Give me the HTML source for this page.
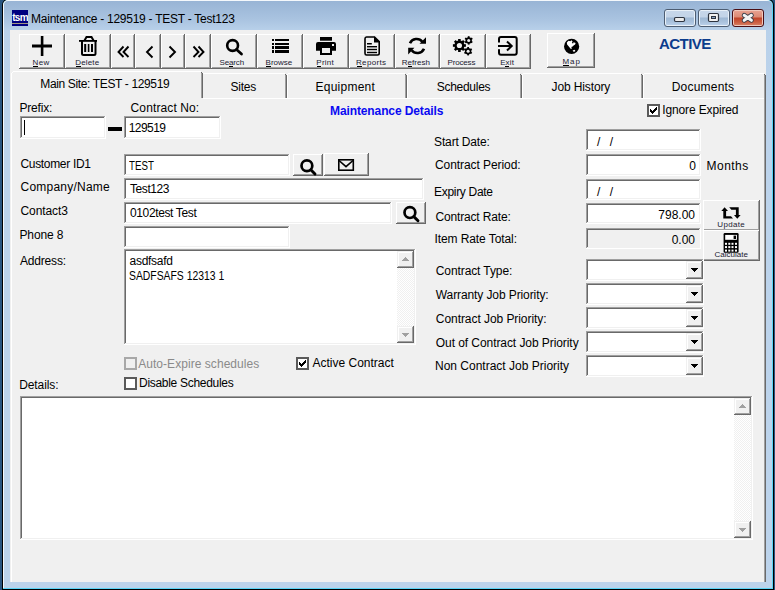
<!DOCTYPE html>
<html><head><meta charset="utf-8">
<style>
*{margin:0;padding:0;box-sizing:border-box}
html,body{width:775px;height:590px;overflow:hidden;background:#29557f}
body{position:relative;font-family:"Liberation Sans",sans-serif;font-size:12px;color:#000}
.a{position:absolute}
.t{position:absolute;white-space:nowrap;line-height:14px;font-size:12px;color:#000}
.s{position:absolute;white-space:nowrap;line-height:10px;font-size:8px;color:#202030;text-align:center}
.rb{position:absolute;background:#f0f0f0;box-shadow:inset -1px -1px #696969,inset 1px 1px #fff,inset -2px -2px #a0a0a0}
.sk{position:absolute;background:#fff;box-shadow:inset -1px -1px #fff,inset 1px 1px #a0a0a0,inset -2px -2px #f0f0f0,inset 2px 2px #696969}
.sb{position:absolute;background:#f0f0f0;box-shadow:inset -1px -1px #696969,inset 1px 1px #f0f0f0,inset -2px -2px #a0a0a0,inset 2px 2px #fff}
.cb{position:absolute;width:13px;height:13px;background:#fff;border:2px solid #5a5a5a}
.u{position:absolute;height:1px;background:#000}
</style></head><body>
<!-- window frame -->
<div class="a" style="left:2px;top:-1px;width:772px;height:591px;background:#000;border-radius:6px 6px 0 0"></div>
<div class="a" style="left:3px;top:0;width:770px;height:589px;background:#5ad4f6;border-radius:5px 5px 0 0"></div>
<div class="a" style="left:3px;top:0;width:769px;height:588px;background:#f4f8fc;border-radius:5px 5px 0 0"></div>
<div class="a" style="left:4px;top:1px;width:768px;height:587px;background:linear-gradient(#98b4d5 0px,#a9c3e0 18px,#b9d1ea 30px,#bcd3eb 100px);border-radius:4px 4px 0 0"></div>
<!-- client area -->
<div class="a" style="left:10px;top:30px;width:756px;height:552px;background:#f0f0f0"></div>
<!-- title icon -->
<div class="a" style="left:12px;top:10px;width:16px;height:16px;background:#000080"></div>
<div class="a" style="left:12px;top:23px;width:16px;height:1px;background:#a09682"></div>
<div class="a" style="left:12px;top:12px;width:16px;height:11px;color:#fff;font:bold 10px/11px 'Liberation Sans',sans-serif;letter-spacing:-0.7px;text-align:center;overflow:hidden">tsm</div>
<div class="t" style="left:31.1px;top:12px;font-size:12px;letter-spacing:-0.25px;color:#000">Maintenance - 129519 - TEST - Test123</div>
<!-- caption buttons -->
<div class="a" style="left:664px;top:9px;width:32px;height:18px;border:1px solid #4d5d72;border-radius:3px;background:linear-gradient(#c7d7ea 0,#c3d4e8 7px,#9fb8d4 8px,#aac2dd 12px,#bdd3ec 16px);box-shadow:inset 0 0 0 1px #e8f0f8"></div>
<div class="a" style="left:698px;top:9px;width:32px;height:18px;border:1px solid #4d5d72;border-radius:3px;background:linear-gradient(#c7d7ea 0,#c3d4e8 7px,#9fb8d4 8px,#aac2dd 12px,#bdd3ec 16px);box-shadow:inset 0 0 0 1px #e8f0f8"></div>
<div class="a" style="left:732px;top:9px;width:32px;height:18px;border:1px solid #4a0e14;border-radius:3px;background:linear-gradient(#e8a494 0,#dc8a74 7px,#c0442a 8px,#cb5c40 12px,#d98468 16px);box-shadow:inset 0 0 0 1px #f0c8bc"></div>
<!-- toolbar buttons -->
<div class="rb" style="left:19px;top:34px;width:46px;height:35px"></div>
<div class="rb" style="left:65px;top:34px;width:46px;height:35px"></div>
<div class="rb" style="left:111px;top:34px;width:24px;height:35px"></div>
<div class="rb" style="left:135px;top:34px;width:26px;height:35px"></div>
<div class="rb" style="left:161px;top:34px;width:24px;height:35px"></div>
<div class="rb" style="left:185px;top:34px;width:26px;height:35px"></div>
<div class="rb" style="left:211px;top:34px;width:46px;height:35px"></div>
<div class="rb" style="left:257px;top:34px;width:46px;height:35px"></div>
<div class="rb" style="left:303px;top:34px;width:46px;height:35px"></div>
<div class="rb" style="left:349px;top:34px;width:46px;height:35px"></div>
<div class="rb" style="left:395px;top:34px;width:45px;height:35px"></div>
<div class="rb" style="left:440px;top:34px;width:46px;height:35px"></div>
<div class="rb" style="left:486px;top:34px;width:45px;height:35px"></div>
<div class="rb" style="left:547px;top:33px;width:48px;height:35px"></div>
<!-- toolbar labels -->
<div class="s" style="left:18.2px;top:58.0px;width:46px;letter-spacing:0.4px">New</div>
<div class="s" style="left:64.3px;top:58.0px;width:46px;letter-spacing:0.16px">Delete</div>
<div class="s" style="left:208.8px;top:58.0px;width:46px;letter-spacing:-0.16px">Search</div>
<div class="s" style="left:255.9px;top:58.0px;width:46px">Browse</div>
<div class="s" style="left:302.1px;top:58.0px;width:46px;letter-spacing:0.2px">Print</div>
<div class="s" style="left:348.2px;top:58.0px;width:46px;letter-spacing:0.33px">Reports</div>
<div class="s" style="left:393.4px;top:58.0px;width:45px;letter-spacing:0.05px">Refresh</div>
<div class="s" style="left:438.4px;top:58.0px;width:46px;letter-spacing:-0.17px">Process</div>
<div class="s" style="left:484.6px;top:58.0px;width:45px;letter-spacing:0.13px">Exit</div>
<div class="s" style="left:547.6px;top:57.0px;width:48px;letter-spacing:0.95px">Map</div>
<div class="u" style="left:33px;top:66px;width:5px"></div>
<div class="u" style="left:76px;top:66px;width:5px"></div>
<div class="u" style="left:229px;top:66px;width:4px"></div>
<div class="u" style="left:266px;top:66px;width:5px"></div>
<div class="u" style="left:317px;top:66px;width:4px"></div>
<div class="u" style="left:357px;top:66px;width:5px"></div>
<div class="u" style="left:408px;top:66px;width:4px"></div>
<div class="u" style="left:505px;top:66px;width:4px"></div>
<div class="u" style="left:563px;top:65px;width:6px"></div>
<div class="a" style="left:659px;top:35px;font:bold 15px/18px 'Liberation Sans',sans-serif;letter-spacing:-0.55px;color:#0b3c8c;white-space:nowrap">ACTIVE</div>
<!-- tabs -->
<div class="a" style="left:13px;top:71px;width:188px;height:1px;background:#fff"></div>
<div class="a" style="left:12px;top:72px;width:1px;height:1px;background:#fff"></div>
<div class="a" style="left:11px;top:73px;width:1px;height:509px;background:#fff"></div>
<div class="a" style="left:201px;top:72px;width:1px;height:1px;background:#696969"></div>
<div class="a" style="left:201px;top:73px;width:1px;height:25px;background:#a0a0a0"></div>
<div class="a" style="left:202px;top:73px;width:1px;height:25px;background:#696969"></div>
<div class="a" style="left:203px;top:73px;width:82px;height:1px;background:#fff"></div>
<div class="a" style="left:285px;top:74px;width:1px;height:24px;background:#696969"></div>
<div class="a" style="left:285px;top:75px;width:1px;height:23px;background:#a0a0a0"></div>
<div class="a" style="left:286px;top:75px;width:1px;height:23px;background:#696969"></div>
<div class="a" style="left:287px;top:75px;width:1px;height:23px;background:#fff"></div>
<div class="a" style="left:288px;top:73px;width:117px;height:1px;background:#fff"></div>
<div class="a" style="left:287px;top:74px;width:1px;height:1px;background:#fff"></div>
<div class="a" style="left:405px;top:74px;width:1px;height:1px;background:#696969"></div>
<div class="a" style="left:405px;top:75px;width:1px;height:23px;background:#a0a0a0"></div>
<div class="a" style="left:406px;top:75px;width:1px;height:23px;background:#696969"></div>
<div class="a" style="left:407px;top:75px;width:1px;height:23px;background:#fff"></div>
<div class="a" style="left:407px;top:74px;width:1px;height:1px;background:#fff"></div>
<div class="a" style="left:408px;top:73px;width:112px;height:1px;background:#fff"></div>
<div class="a" style="left:520px;top:74px;width:1px;height:1px;background:#696969"></div>
<div class="a" style="left:520px;top:75px;width:1px;height:23px;background:#a0a0a0"></div>
<div class="a" style="left:521px;top:75px;width:1px;height:23px;background:#696969"></div>
<div class="a" style="left:522px;top:75px;width:1px;height:23px;background:#fff"></div>
<div class="a" style="left:522px;top:74px;width:1px;height:1px;background:#fff"></div>
<div class="a" style="left:523px;top:73px;width:118px;height:1px;background:#fff"></div>
<div class="a" style="left:641px;top:74px;width:1px;height:1px;background:#696969"></div>
<div class="a" style="left:641px;top:75px;width:1px;height:23px;background:#a0a0a0"></div>
<div class="a" style="left:642px;top:75px;width:1px;height:23px;background:#696969"></div>
<div class="a" style="left:643px;top:75px;width:1px;height:23px;background:#fff"></div>
<div class="a" style="left:643px;top:74px;width:1px;height:1px;background:#fff"></div>
<div class="a" style="left:644px;top:73px;width:120px;height:1px;background:#fff"></div>
<div class="a" style="left:764px;top:74px;width:1px;height:1px;background:#696969"></div>
<div class="a" style="left:764px;top:75px;width:1px;height:507px;background:#a0a0a0"></div>
<div class="a" style="left:765px;top:75px;width:1px;height:507px;background:#696969"></div>
<div class="a" style="left:203px;top:98px;width:561px;height:1px;background:#fff"></div>
<div class="t" style="left:9.3px;top:77.0px;width:191px;text-align:center;letter-spacing:-0.36px">Main Site: TEST - 129519</div>
<div class="t" style="left:201.7px;top:80.0px;width:83px;text-align:center;letter-spacing:-0.25px">Sites</div>
<div class="t" style="left:285.8px;top:80.0px;width:119px;text-align:center;letter-spacing:0.23px">Equipment</div>
<div class="t" style="left:406.0px;top:80.0px;width:115px;text-align:center;letter-spacing:-0.27px">Schedules</div>
<div class="t" style="left:520.4px;top:80.0px;width:121px;text-align:center;letter-spacing:-0.13px">Job History</div>
<div class="t" style="left:642.0px;top:80.0px;width:122px;text-align:center;letter-spacing:0.21px">Documents</div>
<!-- form boxes -->
<div class="sk" style="left:20px;top:116px;width:86px;height:23px"></div>
<div class="a" style="left:24px;top:120px;width:1px;height:15px;background:#000"></div>
<div class="a" style="left:108px;top:127px;width:14px;height:4px;background:#000"></div>
<div class="sk" style="left:124px;top:116px;width:97px;height:23px"></div>
<div class="sk" style="left:124px;top:154px;width:166px;height:22px"></div>
<div class="rb" style="left:293px;top:154px;width:30px;height:22px"></div>
<div class="rb" style="left:324px;top:153px;width:45px;height:23px"></div>
<div class="sk" style="left:124px;top:178px;width:300px;height:22px"></div>
<div class="sk" style="left:124px;top:202px;width:268px;height:22px"></div>
<div class="rb" style="left:396px;top:202px;width:30px;height:22px"></div>
<div class="sk" style="left:124px;top:226px;width:166px;height:22px"></div>
<div class="sk" style="left:124px;top:249px;width:292px;height:96px"></div>
<div class="a" style="left:397px;top:251px;width:17px;height:92px;background:repeating-conic-gradient(#fff 0 25%,#f0f0f0 0 50%) 0 0/2px 2px"></div>
<div class="sb" style="left:397px;top:251px;width:17px;height:17px"></div>
<div class="sb" style="left:397px;top:326px;width:17px;height:17px"></div>
<div class="cb" style="left:124px;top:357px;border-color:#a8a8a8;background:#f0f0f0"></div>
<div class="cb" style="left:296px;top:357px"></div>
<div class="cb" style="left:124px;top:377px"></div>
<div class="cb" style="left:647px;top:104px"></div>
<div class="sk" style="left:20px;top:396px;width:733px;height:144px"></div>
<div class="a" style="left:734px;top:398px;width:17px;height:140px;background:repeating-conic-gradient(#fff 0 25%,#f0f0f0 0 50%) 0 0/2px 2px"></div>
<div class="sb" style="left:734px;top:398px;width:17px;height:17px"></div>
<div class="sb" style="left:734px;top:521px;width:17px;height:17px"></div>
<div class="sk" style="left:586px;top:129px;width:115px;height:22px"></div>
<div class="sk" style="left:586px;top:154px;width:115px;height:22px"></div>
<div class="sk" style="left:586px;top:179px;width:115px;height:21px"></div>
<div class="sk" style="left:586px;top:203px;width:115px;height:21px"></div>
<div class="sk" style="left:586px;top:228px;width:115px;height:21px;background:#f0f0f0"></div>
<div class="rb" style="left:703px;top:200px;width:57px;height:31px"></div>
<div class="rb" style="left:703px;top:230px;width:57px;height:31px"></div>
<div class="sk" style="left:586px;top:259px;width:118px;height:22px"></div>
<div class="sb" style="left:686px;top:261px;width:17px;height:18px"></div>
<div class="sk" style="left:586px;top:283px;width:118px;height:22px"></div>
<div class="sb" style="left:686px;top:285px;width:17px;height:18px"></div>
<div class="sk" style="left:586px;top:307px;width:118px;height:22px"></div>
<div class="sb" style="left:686px;top:309px;width:17px;height:18px"></div>
<div class="sk" style="left:586px;top:331px;width:118px;height:22px"></div>
<div class="sb" style="left:686px;top:333px;width:17px;height:18px"></div>
<div class="sk" style="left:586px;top:355px;width:118px;height:22px"></div>
<div class="sb" style="left:686px;top:357px;width:17px;height:18px"></div>
<!-- form labels -->
<div class="t" style="left:19.4px;top:101.0px;letter-spacing:-0.17px">Prefix:</div>
<div class="t" style="left:130.6px;top:101.0px;letter-spacing:0.11px">Contract No:</div>
<div class="t" style="left:128.7px;top:121.0px;letter-spacing:-0.54px">129519</div>
<div class="t" style="left:330.0px;top:104.0px;font-weight:bold;color:#0a0af2;letter-spacing:-0.11px">Maintenance Details</div>
<div class="t" style="left:662.2px;top:103.0px;letter-spacing:-0.13px">Ignore Expired</div>
<div class="t" style="left:20.5px;top:157.0px;letter-spacing:-0.33px">Customer ID1</div>
<div class="t" style="left:20.5px;top:180.0px;letter-spacing:0.23px">Company/Name</div>
<div class="t" style="left:20.5px;top:204.0px;letter-spacing:-0.1px">Contact3</div>
<div class="t" style="left:19.5px;top:228.0px;letter-spacing:-0.13px">Phone 8</div>
<div class="t" style="left:20.0px;top:254.0px;letter-spacing:-0.19px">Address:</div>
<div class="t" style="left:129px;top:159.0px;transform:scaleX(0.81);transform-origin:0 0">TEST</div>
<div class="t" style="left:130.0px;top:182.0px;letter-spacing:-0.42px">Test123</div>
<div class="t" style="left:130.0px;top:206.0px;letter-spacing:-0.37px">0102test Test</div>
<div class="t" style="left:129.5px;top:254.0px;letter-spacing:-0.27px">asdfsafd</div>
<div class="t" style="left:129px;top:269.0px;transform:scaleX(0.865);transform-origin:0 0">SADFSAFS 12313 1</div>
<div class="t" style="left:138.2px;top:357.0px;color:#8a8a8a;letter-spacing:0.05px">Auto-Expire schedules</div>
<div class="t" style="left:312.5px;top:356.0px">Active Contract</div>
<div class="t" style="left:139.0px;top:376.0px;letter-spacing:-0.29px">Disable Schedules</div>
<div class="t" style="left:19.2px;top:378.0px;letter-spacing:-0.1px">Details:</div>
<div class="t" style="left:434.1px;top:135.0px;letter-spacing:-0.16px">Start Date:</div>
<div class="t" style="left:435.0px;top:158.0px;letter-spacing:-0.07px">Contract Period:</div>
<div class="t" style="left:434.0px;top:185.0px;letter-spacing:-0.3px">Expiry Date</div>
<div class="t" style="left:435.4px;top:210.0px;letter-spacing:-0.15px">Contract Rate:</div>
<div class="t" style="left:434.4px;top:232.0px;letter-spacing:-0.08px">Item Rate Total:</div>
<div class="t" style="left:435.8px;top:264.0px;letter-spacing:-0.1px">Contract Type:</div>
<div class="t" style="left:435.8px;top:288.0px;letter-spacing:-0.1px">Warranty Job Priority:</div>
<div class="t" style="left:435.8px;top:312.0px;letter-spacing:-0.06px">Contract Job Priority:</div>
<div class="t" style="left:435.8px;top:336.0px;letter-spacing:-0.07px">Out of Contract Job Priority</div>
<div class="t" style="left:435.0px;top:359.0px">Non Contract Job Priority</div>
<div class="t" style="left:597px;top:135px;letter-spacing:3px">/ /</div>
<div class="t" style="left:597px;top:185px;letter-spacing:3px">/ /</div>
<div class="t" style="left:590px;top:159px;width:106px;text-align:right">0</div>
<div class="t" style="left:589.0px;top:208.0px;width:106px;text-align:right">798.00</div>
<div class="t" style="left:589.0px;top:233.0px;width:106px;text-align:right">0.00</div>
<div class="t" style="left:706.5px;top:159.0px;letter-spacing:0.48px">Months</div>
<div class="s" style="left:703.2px;top:220.0px;width:56px;letter-spacing:0.32px">Update</div>
<!-- ICONS -->
<svg class="a" style="left:0;top:0" width="775" height="590" viewBox="0 0 775 590">
<!-- caption glyphs -->
<rect x="674.5" y="17.5" width="10" height="4" rx="1.2" fill="#ececec" stroke="#2e3440" stroke-width="1.2"/>
<rect x="708.5" y="13.5" width="10" height="8" rx="1.2" fill="#f2f2f2" stroke="#2e3440" stroke-width="1.2"/>
<rect x="711.5" y="16.5" width="4" height="2" fill="#8aa4c4" stroke="#2e3440" stroke-width="1"/>
<path d="M744.2,15.3 L751.4,20.3 M751.4,15.3 L744.2,20.3" stroke="#3a3f4a" stroke-width="4.8" stroke-linecap="round"/>
<path d="M744.2,15.3 L751.4,20.3 M751.4,15.3 L744.2,20.3" stroke="#f4f4f4" stroke-width="3" stroke-linecap="round"/>
<!-- New plus -->
<rect x="40.8" y="36" width="2.6" height="20" fill="#000"/>
<rect x="32" y="44.5" width="20" height="3" fill="#000"/>
<!-- Delete trash -->
<path d="M84.5,40.5 L86.5,37 L91.5,37 L93.5,40.5" fill="none" stroke="#000" stroke-width="2"/>
<rect x="79" y="40" width="18" height="1.8" fill="#000"/>
<path d="M82,41 L82,53.5 Q82,55 83.5,55 L94,55 Q95.5,55 95.5,53.5 L95.5,41" fill="none" stroke="#000" stroke-width="2"/>
<rect x="84.2" y="44" width="2" height="8" fill="#000"/>
<rect x="87.8" y="44" width="1.6" height="8" fill="#000"/>
<rect x="91" y="44" width="2" height="8" fill="#000"/>
<!-- nav arrows -->
<path d="M123.5,46.5 L118.5,52 L123.5,57 M128.5,46.5 L123.5,52 L128.5,57" fill="none" stroke="#000" stroke-width="1.9"/>
<path d="M152.5,46.5 L147,52 L152.5,57.5" fill="none" stroke="#000" stroke-width="1.9"/>
<path d="M169.5,46.5 L175,52 L169.5,57.5" fill="none" stroke="#000" stroke-width="1.9"/>
<path d="M193.5,46.5 L198.5,52 L193.5,57 M198.5,46.5 L203.5,52 L198.5,57" fill="none" stroke="#000" stroke-width="1.9"/>
<!-- search -->
<circle cx="232.6" cy="45.5" r="5.4" fill="none" stroke="#000" stroke-width="2.6"/>
<path d="M236.5,49.5 L241.5,54" stroke="#000" stroke-width="2.8" stroke-linecap="round"/>
<!-- browse list -->
<rect x="272" y="39" width="2" height="2" fill="#000"/><rect x="275" y="39" width="14" height="2" fill="#000"/>
<rect x="272" y="43" width="2" height="2" fill="#000"/><rect x="275" y="43" width="14" height="2" fill="#000"/>
<rect x="272" y="46" width="2" height="3" fill="#000"/><rect x="275" y="46" width="14" height="3" fill="#000"/>
<rect x="272" y="50" width="2" height="3" fill="#000"/><rect x="275" y="50" width="14" height="3" fill="#000"/>
<!-- print -->
<rect x="320" y="37" width="12" height="3.7" fill="#000"/>
<path d="M318,42 L334,42 Q336,42 336,44 L336,50.7 L332,50.7 L332,55 L320,55 L320,50.7 L316,50.7 L316,44 Q316,42 318,42 Z" fill="#000"/>
<rect x="322" y="48" width="8" height="5" fill="#f0f0f0"/>
<rect x="332" y="44" width="2" height="2" fill="#f0f0f0"/>
<!-- reports -->
<path d="M366.5,37 L374.5,37 L379.2,41.7 L379.2,53.3 Q379.2,55 377.5,55 L366.5,55 Q365,55 365,53.3 L365,38.7 Q365,37 366.5,37 Z" fill="none" stroke="#000" stroke-width="1.6"/>
<path d="M374,36.5 L380,42.5 L374,42.5 Z" fill="#000"/>
<rect x="367" y="43" width="4.8" height="1.5" fill="#000"/>
<rect x="367" y="46" width="10" height="1.4" fill="#000"/>
<rect x="367" y="48.8" width="10" height="1.4" fill="#000"/>
<rect x="367" y="51.8" width="10" height="1.4" fill="#000"/>
<!-- refresh -->
<path d="M410,43.3 A7.2,7.2 0 0 1 422.3,41.8" fill="none" stroke="#000" stroke-width="2.6"/>
<path d="M426,37.3 L426,43.7 L419.5,43.7 Z" fill="#000"/>
<path d="M424,48.7 A7.2,7.2 0 0 1 411.7,50.2" fill="none" stroke="#000" stroke-width="2.6"/>
<path d="M408.2,47.8 L408.2,54.4 L414.4,47.8 Z" fill="#000"/>
<!-- gears -->
<g fill="#000">
<circle cx="459.4" cy="45.5" r="5"/>
<g transform="translate(459.4 45.5)"><rect x="-1.3" y="-6.5" width="2.6" height="13"/><rect x="-1.3" y="-6.5" width="2.6" height="13" transform="rotate(45)"/><rect x="-1.3" y="-6.5" width="2.6" height="13" transform="rotate(90)"/><rect x="-1.3" y="-6.5" width="2.6" height="13" transform="rotate(135)"/></g>
<circle cx="468.7" cy="40.4" r="3.2"/>
<g transform="translate(468.7 40.4)"><rect x="-0.9" y="-4.2" width="1.8" height="8.4"/><rect x="-0.9" y="-4.2" width="1.8" height="8.4" transform="rotate(60)"/><rect x="-0.9" y="-4.2" width="1.8" height="8.4" transform="rotate(120)"/></g>
<circle cx="468.1" cy="51.2" r="3.2"/>
<g transform="translate(468.1 51.2)"><rect x="-0.9" y="-4.2" width="1.8" height="8.4"/><rect x="-0.9" y="-4.2" width="1.8" height="8.4" transform="rotate(60)"/><rect x="-0.9" y="-4.2" width="1.8" height="8.4" transform="rotate(120)"/></g>
</g>
<circle cx="459.4" cy="45.5" r="2.6" fill="#f0f0f0"/>
<circle cx="468.7" cy="40.4" r="1.5" fill="#f0f0f0"/>
<circle cx="468.1" cy="51.2" r="1.5" fill="#f0f0f0"/>
<!-- exit -->
<path d="M499,42.5 L499,39 Q499,37 501,37 L514.7,37 Q516.7,37 516.7,39 L516.7,52.7 Q516.7,54.7 514.7,54.7 L501,54.7 Q499,54.7 499,52.7 L499,49.3" fill="none" stroke="#000" stroke-width="2"/>
<path d="M498,46 L511.5,46" stroke="#000" stroke-width="2"/>
<path d="M507,41.5 L511.7,46 L507,50.5" fill="none" stroke="#000" stroke-width="2"/>
<!-- globe -->
<circle cx="571.6" cy="46.4" r="7.6" fill="#000"/>
<path d="M566.8,42.5 L568.5,40.7 L570.3,41.2 L571.4,40.3 L572.6,41.6 L571.8,42.9 L573.1,43.4 L573.6,42.2 L575.6,42.9 L575.1,44.6 L573.6,45.4 L572.6,46.6 L571.3,46.9 L571.9,48.4 L570.9,49.1 L569.6,47.6 L568.4,46.1 L567.1,44.6 Z" fill="#fff"/>
<path d="M572.6,50.4 L574.6,49.7 L575.4,50.9 L573.9,52.1 Z" fill="#fff"/>
<!-- small magnifiers -->
<circle cx="306.9" cy="165.8" r="5.4" fill="none" stroke="#000" stroke-width="2.7"/>
<path d="M310.8,169.8 L315,174" stroke="#000" stroke-width="2.9" stroke-linecap="round"/>
<circle cx="409.9" cy="212.6" r="5.4" fill="none" stroke="#000" stroke-width="2.7"/>
<path d="M413.8,216.6 L418,220.8" stroke="#000" stroke-width="2.9" stroke-linecap="round"/>
<!-- envelope -->
<rect x="338.8" y="159.8" width="14.5" height="10.4" fill="none" stroke="#000" stroke-width="1.6"/>
<path d="M339,160.5 L346,166.7 L353,160.5" fill="none" stroke="#000" stroke-width="1.6"/>
<!-- update arrows -->
<path d="M721.3,211 L724.6,207.2 L728,211 Z" fill="#000"/>
<path d="M723.3,210.5 L723.3,218.6 L733,218.6 L731,216.2 L726.1,216.2 L726.1,210.5 Z" fill="#000"/>
<path d="M729.2,207.2 L738.7,207.2 L738.7,215 L735.9,215 L735.9,209.8 L731.4,209.8 Z" fill="#000"/>
<path d="M734,215 L740.6,215 L737.3,218.8 Z" fill="#000"/>
<!-- calculator -->
<rect x="723.6" y="233" width="15" height="19.8" rx="1.2" fill="#000"/>
<rect x="725.2" y="234.9" width="11.7" height="4.9" fill="#fff"/>
<rect x="733.6" y="235.6" width="2.4" height="3.4" fill="#000"/>
<g fill="#fff">
<rect x="725" y="242.8" width="2" height="2"/><rect x="728.3" y="242.8" width="2" height="2"/><rect x="731.5" y="242.8" width="2" height="2"/><rect x="735" y="242.8" width="2" height="2"/>
<rect x="725" y="246.1" width="2" height="2"/><rect x="728.3" y="246.1" width="2" height="2"/><rect x="731.5" y="246.1" width="2" height="2"/><rect x="735" y="246.1" width="2" height="2"/>
<rect x="725" y="249.6" width="2" height="2"/><rect x="728.3" y="249.6" width="2" height="2"/><rect x="731.5" y="249.6" width="2" height="2"/><rect x="735" y="249.6" width="2" height="2"/>
</g>
<!-- checkmarks (7x7 pixel art) -->
<g fill="#000" shape-rendering="crispEdges">
<path d="M656,107h1v1h-1z M655,108h2v1h-2z M650,109h1v1h-1z M654,109h3v1h-3z M650,110h2v1h-2z M653,110h3v1h-3z M650,111h5v1h-5z M651,112h3v1h-3z M652,113h1v1h-1z"/>
<path transform="translate(-351 253)" d="M656,107h1v1h-1z M655,108h2v1h-2z M650,109h1v1h-1z M654,109h3v1h-3z M650,110h2v1h-2z M653,110h3v1h-3z M650,111h5v1h-5z M651,112h3v1h-3z M652,113h1v1h-1z"/>
</g>
<!-- scroll arrows -->
<g fill="#a0a0a0" shape-rendering="crispEdges">
<path d="M405,257h1v1h-1z M404,258h3v1h-3z M403,259h5v1h-5z M402,260h7v1h-7z"/>
<path d="M402,333h7v1h-7z M403,334h5v1h-5z M404,335h3v1h-3z M405,336h1v1h-1z"/>
<path d="M742,404h1v1h-1z M741,405h3v1h-3z M740,406h5v1h-5z M739,407h7v1h-7z"/>
<path d="M739,528h7v1h-7z M740,529h5v1h-5z M741,530h3v1h-3z M742,531h1v1h-1z"/>
</g>
<!-- combo arrows -->
<g fill="#000" shape-rendering="crispEdges">
<path d="M691,268h7v1h-7z M692,269h5v1h-5z M693,270h3v1h-3z M694,271h1v1h-1z"/>
<path transform="translate(0 24)" d="M691,268h7v1h-7z M692,269h5v1h-5z M693,270h3v1h-3z M694,271h1v1h-1z"/>
<path transform="translate(0 48)" d="M691,268h7v1h-7z M692,269h5v1h-5z M693,270h3v1h-3z M694,271h1v1h-1z"/>
<path transform="translate(0 72)" d="M691,268h7v1h-7z M692,269h5v1h-5z M693,270h3v1h-3z M694,271h1v1h-1z"/>
<path transform="translate(0 96)" d="M691,268h7v1h-7z M692,269h5v1h-5z M693,270h3v1h-3z M694,271h1v1h-1z"/>
</g>
</svg>
<div class="s" style="left:703.2px;top:250.0px;width:56px;letter-spacing:0.03px">Calculate</div>
</body></html>
